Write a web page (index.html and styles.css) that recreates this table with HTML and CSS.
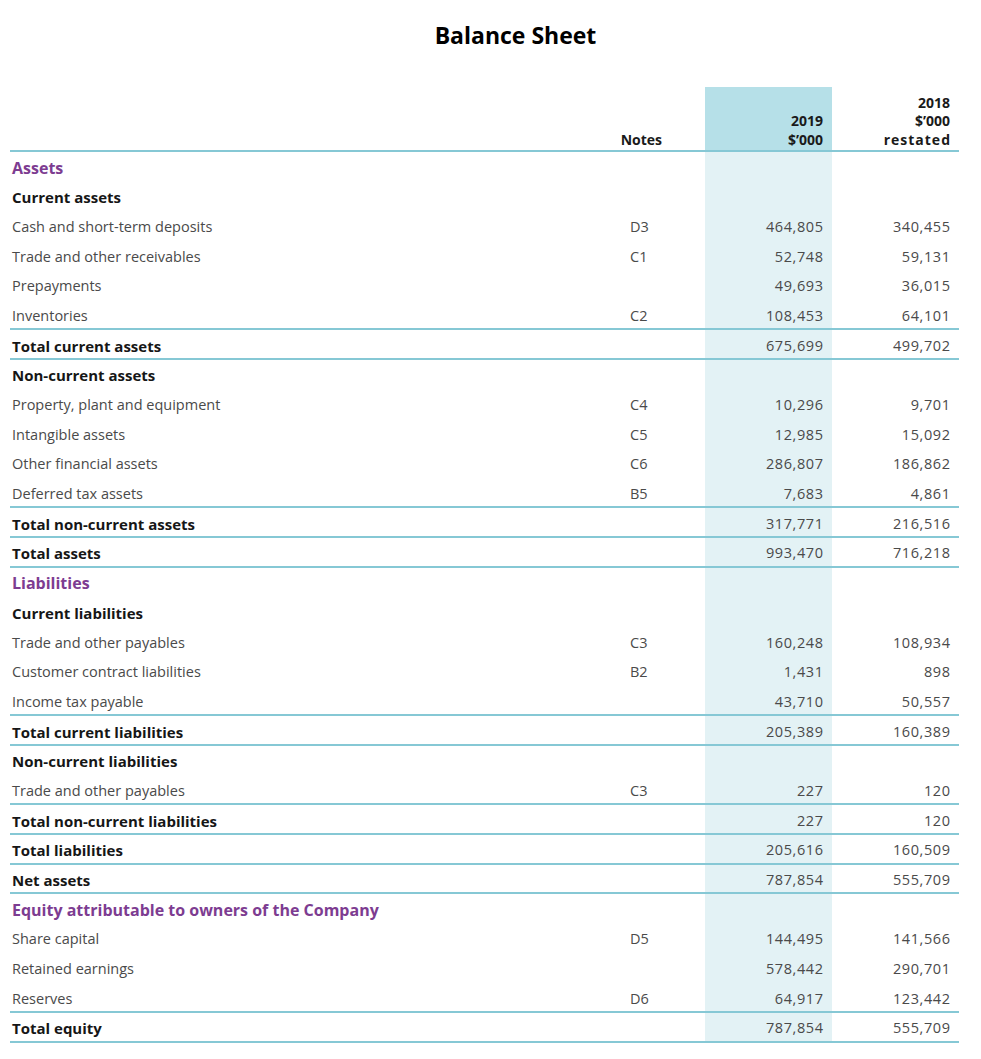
FILE: index.html
```html
<!DOCTYPE html>
<html lang="en">
<head>
<meta charset="utf-8">
<title>Balance Sheet</title>
<link rel="stylesheet" href="styles.css">
</head>
<body>
<h1 class="title">Balance Sheet</h1>
<div class="sheet">
  <div class="row head">
    <div class="c lbl"></div>
    <div class="c note">Notes</div>
    <div class="c num cur">2019<br>$’000</div>
    <div class="c num">2018<br>$’000<br><span class="wide">restated</span></div>
  </div>

  <div class="row sec"><div class="c lbl">Assets</div><div class="c note"></div><div class="c num cur"></div><div class="c num"></div></div>
  <div class="row sub"><div class="c lbl">Current assets</div><div class="c note"></div><div class="c num cur"></div><div class="c num"></div></div>
  <div class="row"><div class="c lbl">Cash and short-term deposits</div><div class="c note">D3</div><div class="c num cur">464,805</div><div class="c num">340,455</div></div>
  <div class="row"><div class="c lbl">Trade and other receivables</div><div class="c note">C1</div><div class="c num cur">52,748</div><div class="c num">59,131</div></div>
  <div class="row"><div class="c lbl">Prepayments</div><div class="c note"></div><div class="c num cur">49,693</div><div class="c num">36,015</div></div>
  <div class="row line"><div class="c lbl">Inventories</div><div class="c note">C2</div><div class="c num cur">108,453</div><div class="c num">64,101</div></div>
  <div class="row sub line"><div class="c lbl">Total current assets</div><div class="c note"></div><div class="c num cur">675,699</div><div class="c num">499,702</div></div>
  <div class="row sub"><div class="c lbl">Non-current assets</div><div class="c note"></div><div class="c num cur"></div><div class="c num"></div></div>
  <div class="row"><div class="c lbl">Property, plant and equipment</div><div class="c note">C4</div><div class="c num cur">10,296</div><div class="c num">9,701</div></div>
  <div class="row"><div class="c lbl">Intangible assets</div><div class="c note">C5</div><div class="c num cur">12,985</div><div class="c num">15,092</div></div>
  <div class="row"><div class="c lbl">Other financial assets</div><div class="c note">C6</div><div class="c num cur">286,807</div><div class="c num">186,862</div></div>
  <div class="row line"><div class="c lbl">Deferred tax assets</div><div class="c note">B5</div><div class="c num cur">7,683</div><div class="c num">4,861</div></div>
  <div class="row sub line"><div class="c lbl">Total non-current assets</div><div class="c note"></div><div class="c num cur">317,771</div><div class="c num">216,516</div></div>
  <div class="row sub line"><div class="c lbl">Total assets</div><div class="c note"></div><div class="c num cur">993,470</div><div class="c num">716,218</div></div>

  <div class="row sec"><div class="c lbl">Liabilities</div><div class="c note"></div><div class="c num cur"></div><div class="c num"></div></div>
  <div class="row sub"><div class="c lbl">Current liabilities</div><div class="c note"></div><div class="c num cur"></div><div class="c num"></div></div>
  <div class="row"><div class="c lbl">Trade and other payables</div><div class="c note">C3</div><div class="c num cur">160,248</div><div class="c num">108,934</div></div>
  <div class="row"><div class="c lbl">Customer contract liabilities</div><div class="c note">B2</div><div class="c num cur">1,431</div><div class="c num">898</div></div>
  <div class="row line"><div class="c lbl">Income tax payable</div><div class="c note"></div><div class="c num cur">43,710</div><div class="c num">50,557</div></div>
  <div class="row sub line"><div class="c lbl">Total current liabilities</div><div class="c note"></div><div class="c num cur">205,389</div><div class="c num">160,389</div></div>
  <div class="row sub"><div class="c lbl">Non-current liabilities</div><div class="c note"></div><div class="c num cur"></div><div class="c num"></div></div>
  <div class="row line"><div class="c lbl">Trade and other payables</div><div class="c note">C3</div><div class="c num cur">227</div><div class="c num">120</div></div>
  <div class="row sub line"><div class="c lbl">Total non-current liabilities</div><div class="c note"></div><div class="c num cur">227</div><div class="c num">120</div></div>
  <div class="row sub line"><div class="c lbl">Total liabilities</div><div class="c note"></div><div class="c num cur">205,616</div><div class="c num">160,509</div></div>
  <div class="row sub line"><div class="c lbl">Net assets</div><div class="c note"></div><div class="c num cur">787,854</div><div class="c num">555,709</div></div>

  <div class="row sec"><div class="c lbl">Equity attributable to owners of the Company</div><div class="c note"></div><div class="c num cur"></div><div class="c num"></div></div>
  <div class="row"><div class="c lbl">Share capital</div><div class="c note">D5</div><div class="c num cur">144,495</div><div class="c num">141,566</div></div>
  <div class="row"><div class="c lbl">Retained earnings</div><div class="c note"></div><div class="c num cur">578,442</div><div class="c num">290,701</div></div>
  <div class="row line"><div class="c lbl">Reserves</div><div class="c note">D6</div><div class="c num cur">64,917</div><div class="c num">123,442</div></div>
  <div class="row sub line"><div class="c lbl">Total equity</div><div class="c note"></div><div class="c num cur">787,854</div><div class="c num">555,709</div></div>
</div>
</body>
</html>
```

FILE: styles.css
```css
html, body {
  margin: 0;
  padding: 0;
  background: #ffffff;
}

body {
  font-family: "Open Sans", "Liberation Sans", sans-serif;
  color: #4a4a4a;
}

.title {
  margin: 0;
  padding: 20px 0 0 50px;
  height: 30px;
  line-height: 30px;
  font-size: 23px;
  font-weight: 700;
  color: #000;
  text-align: center;
}

.sheet {
  margin: 37px 0 0 10px;
  width: 949px;
}

.row {
  display: grid;
  grid-template-columns: 590px 105px 127px 127px;
  height: 29.7px;
  font-size: 14.5px;
}

.c {
  box-sizing: border-box;
  height: 100%;
  padding-top: 5.5px;
  line-height: 20px;
  white-space: nowrap;
}

.lbl {
  padding-left: 2px;
}

.note {
  padding-left: 30px;
}

.num {
  text-align: right;
  padding-right: 8.4px;
  letter-spacing: 0.6px;
}

.cur {
  background: #e3f2f5;
}

.line .c {
  border-bottom: 2px solid #86c8d5;
}

.sub .lbl {
  font-weight: 700;
  font-size: 15px;
  color: #161616;
}

.sec .lbl {
  font-weight: 700;
  color: #7d3c91;
  font-size: 16px;
}

.head {
  height: 65px;
  font-size: 14px;
  font-weight: 700;
  color: #1a1a1a;
}

.head .c {
  display: flex;
  flex-direction: column;
  justify-content: flex-end;
  align-items: flex-end;
  padding-top: 0;
  padding-bottom: 1px;
  padding-right: 9px;
  line-height: 18.5px;
  letter-spacing: 0;
  border-bottom: 2px solid #86c8d5;
}

.head .wide {
  letter-spacing: 1px;
  margin-right: -1px;
}

.head .note {
  padding-left: 0;
  padding-right: 43px;
}

.head .cur {
  background: #b6e0e8;
}
```
